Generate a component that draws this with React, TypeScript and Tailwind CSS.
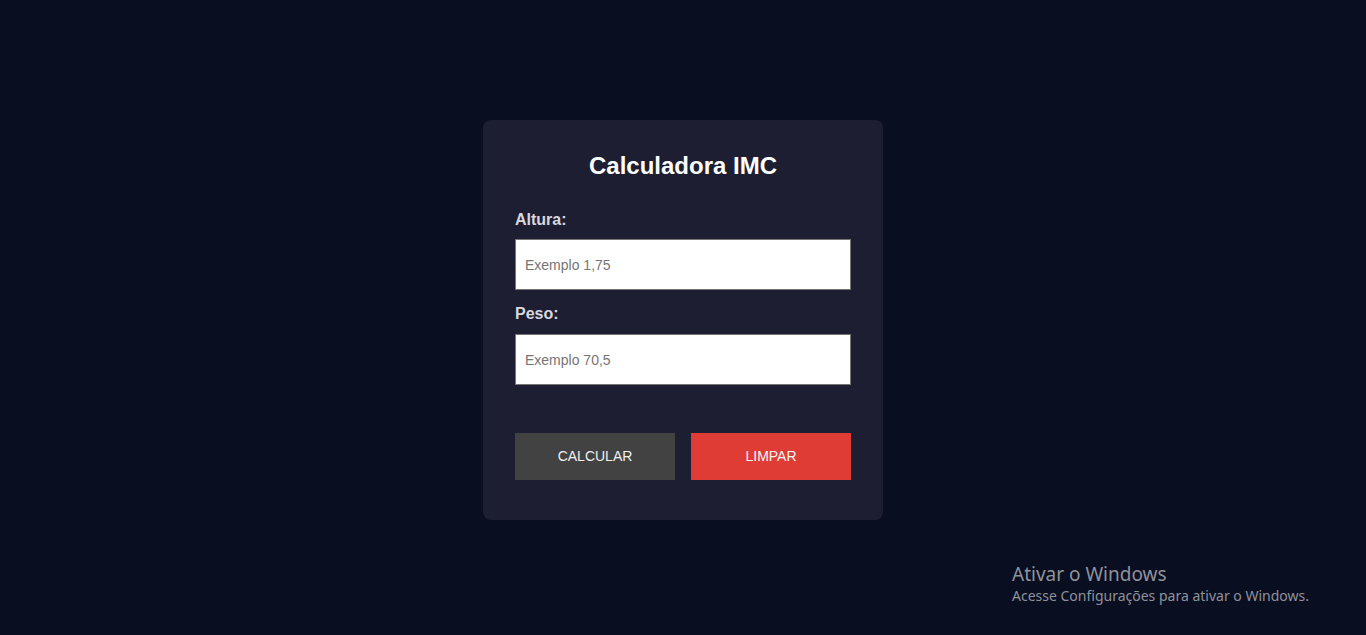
import React from 'react';

export default function App() {
  return (
    <div className="relative min-h-screen bg-[#0a0e21] flex justify-center pt-[120px] font-['Liberation_Sans',Arial,sans-serif]">
      <div className="w-[400px] h-[400px] bg-[#1e1e33] rounded-lg px-8 pt-8 pb-10 flex flex-col">
        <h1 className="text-white text-[24px] leading-[28px] font-bold text-center mb-[30px]">Calculadora IMC</h1>

        <label className="block text-[#d8d8de] text-base leading-[20px] font-bold mb-[9px]">Altura:</label>
        <input
          type="text"
          placeholder="Exemplo 1,75"
          className="w-full h-[51px] bg-white border border-[#767676] px-[9px] text-sm text-black placeholder:text-[#757575] outline-none"
        />

        <label className="block text-[#d8d8de] text-base leading-[20px] font-bold mt-[14px] mb-[10px]">Peso:</label>
        <input
          type="text"
          placeholder="Exemplo 70,5"
          className="w-full h-[51px] bg-white border border-[#767676] px-[9px] text-sm text-black placeholder:text-[#757575] outline-none"
        />

        <div className="flex gap-4 mt-[48px]">
          <button className="w-[160px] h-[47px] pb-[2px] bg-[#424242] text-[#f0f0f0] text-sm">CALCULAR</button>
          <button className="w-[160px] h-[47px] pb-[2px] bg-[#de3c35] text-[#f5f5f5] text-sm">LIMPAR</button>
        </div>
      </div>

      {/* marca d'água do Windows */}
      <div className="absolute left-[1012px] top-[562px] text-[#8f929b] font-['Noto_Sans','Open_Sans',sans-serif] pointer-events-none">
        <div className="text-[19px] leading-[24px]">Ativar o Windows</div>
        <div className="text-[14px] leading-[20px]">Acesse Configurações para ativar o Windows.</div>
      </div>
    </div>
  );
}
